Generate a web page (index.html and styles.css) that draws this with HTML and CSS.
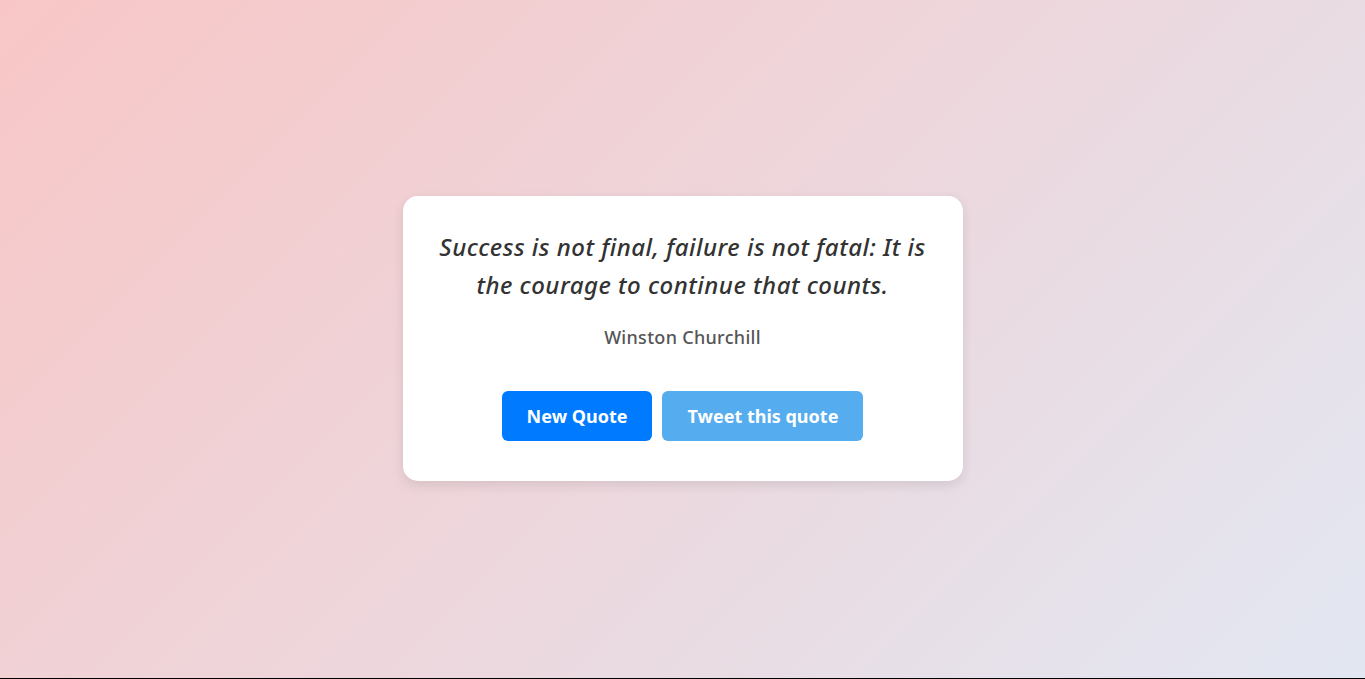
FILE: index.html
```html
<!DOCTYPE html>
<html lang="en">
<head>
<meta charset="utf-8">
<title>Quote Generator</title>
<link rel="stylesheet" href="styles.css">
</head>
<body>
<main class="quote-box">
  <p class="quote-text">Success is not final, failure is not fatal: It is the courage to continue that counts.</p>
  <p class="quote-author">Winston Churchill</p>
  <div class="actions">
    <button class="btn btn-new">New Quote</button>
    <button class="btn btn-tweet">Tweet this quote</button>
  </div>
</main>
</body>
</html>
```

FILE: styles.css
```css
html {
  background: #000;
}
body {
  margin: 0;
  height: 677px;
  padding-bottom: 1px;
  display: flex;
  align-items: center;
  justify-content: center;
  background: linear-gradient(135deg, #f8c6c6 0%, #e2e7f2 100%);
  font-family: "Noto Sans", "Open Sans", sans-serif;
}
.quote-box {
  width: 500px;
  background: #fff;
  border-radius: 15px;
  padding: 32px 30px 40px;
  box-shadow: 0 4px 12px rgba(0, 0, 0, 0.1);
  text-align: center;
}
.quote-text {
  margin: 0 0 20px;
  font-size: 24px;
  font-style: italic;
  font-weight: 500;
  letter-spacing: 0.5px;
  line-height: 38px;
  color: #333;
}
.quote-author {
  margin: 0 0 40px;
  font-size: 18px;
  font-weight: 500;
  letter-spacing: 0.3px;
  line-height: 27px;
  color: #555;
}
.actions {
  display: flex;
  justify-content: center;
  gap: 10px;
}
.btn {
  height: 50px;
  padding: 0 25px;
  border: none;
  border-radius: 6px;
  color: #fff;
  font-family: inherit;
  font-size: 18px;
  font-weight: bold;
}
.btn-new {
  background: #007bff;
}
.btn-tweet {
  background: #55acee;
}
```
